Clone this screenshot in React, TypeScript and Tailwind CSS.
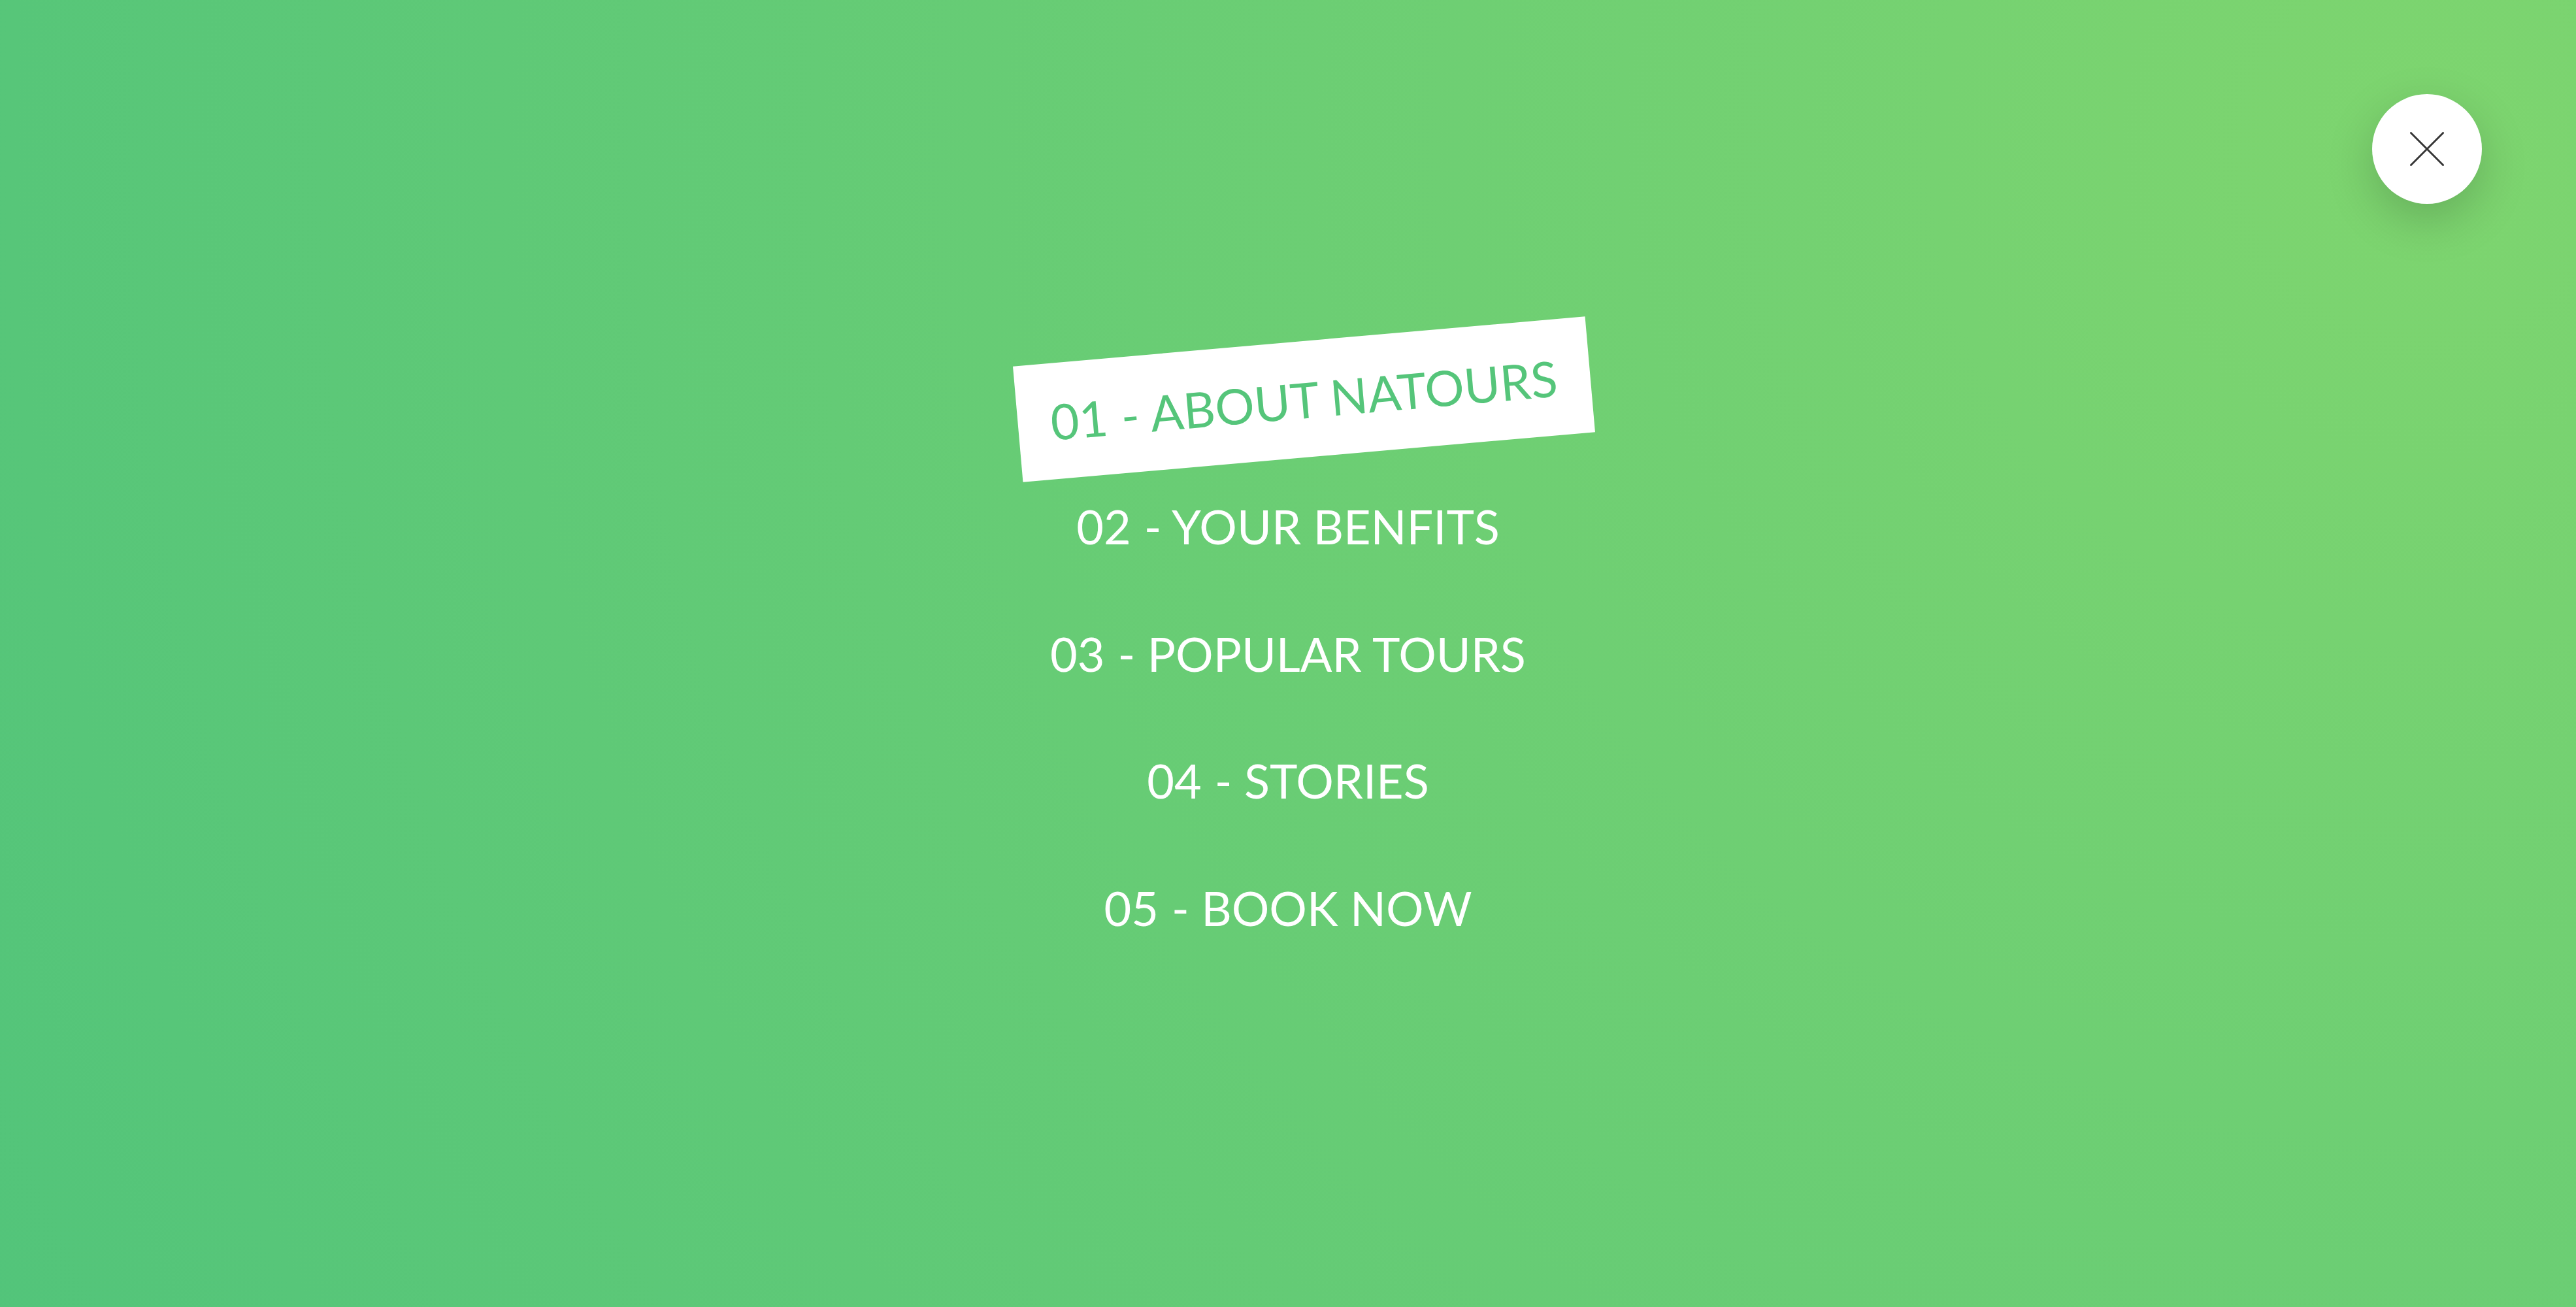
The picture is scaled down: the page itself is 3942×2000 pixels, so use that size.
const links = [
  { num: "01", label: "About Natours" },
  { num: "02", label: "Your Benfits" },
  { num: "03", label: "Popular Tours" },
  { num: "04", label: "Stories" },
  { num: "05", label: "Book Now" },
];

function CloseButton() {
  return (
    <button className="absolute right-[144px] top-[144px] flex h-[168px] w-[168px] items-center justify-center rounded-full bg-white shadow-[0_24px_72px_rgba(0,0,0,0.18)]">
      <svg width="52" height="52" viewBox="0 0 52 52">
        <line x1="0.5" y1="0.5" x2="51.5" y2="51.5" stroke="#333" strokeWidth="2.8" />
        <line x1="51.5" y1="0.5" x2="0.5" y2="51.5" stroke="#333" strokeWidth="2.8" />
      </svg>
    </button>
  );
}

export default function App() {
  return (
    <div className="relative flex h-[2000px] w-full items-center justify-center overflow-hidden bg-[radial-gradient(circle_8146px_at_calc(100%_-_228px)_228px,#7ed56f,#28b485)] font-['Lato','Liberation_Sans',sans-serif]">
      <CloseButton />
      <nav>
        <ul className="flex flex-col items-center gap-6 text-center">
          {links.map((link, i) => (
            <li key={link.num}>
              <a
                href="#"
                className={
                  i === 0
                    ? "inline-block translate-x-6 scale-[1.045] -rotate-5 bg-white px-12 py-6 text-[72px] font-normal uppercase leading-[1.7] text-[#55c57a]"
                    : "inline-block px-12 py-6 text-[72px] font-normal uppercase leading-[1.7] text-white"
                }
              >
                <span className="mr-5 inline-block">{link.num}</span>- {link.label}
              </a>
            </li>
          ))}
        </ul>
      </nav>
    </div>
  );
}
